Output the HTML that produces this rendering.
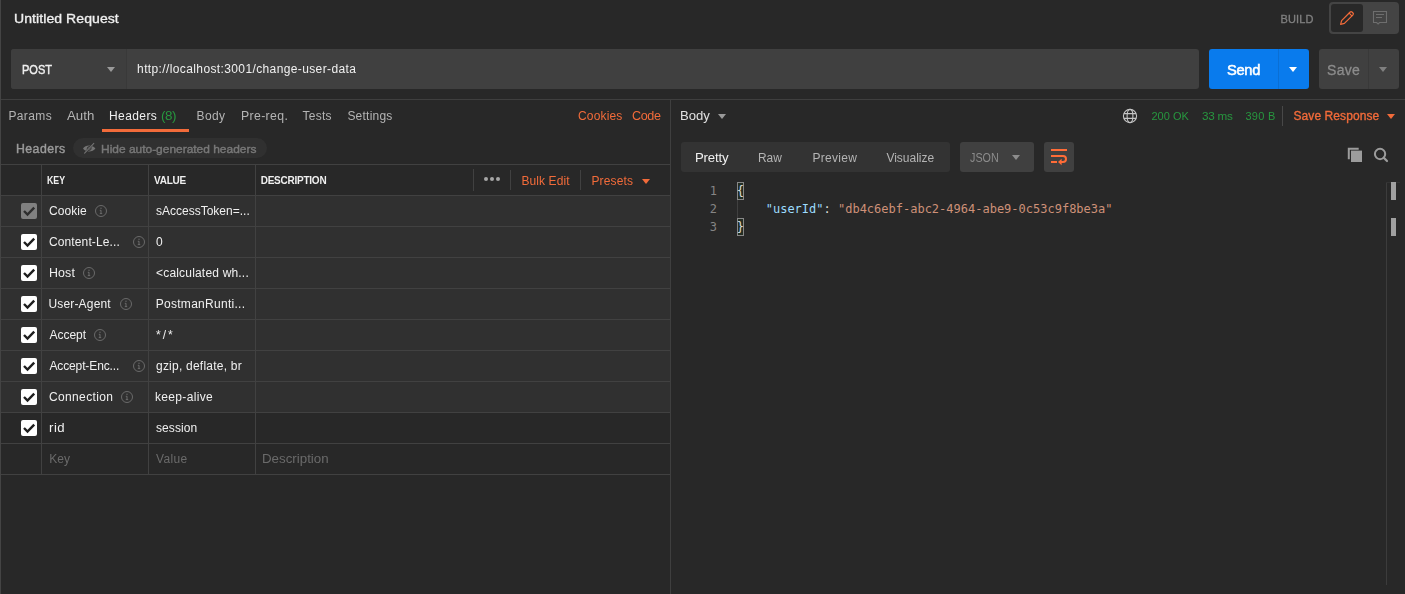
<!DOCTYPE html>
<html lang="en">
<head>
<meta charset="utf-8">
<title>Untitled Request</title>
<style>
html,body{margin:0;padding:0;}
body{width:1405px;height:594px;overflow:hidden;background:#282828;position:relative;font-family:"Liberation Sans",sans-serif;}
.b{position:absolute;}
.t{position:absolute;white-space:nowrap;line-height:16px;height:16px;}
.hl{position:absolute;height:1px;background:#414141;}
.vl{position:absolute;width:1px;background:#414141;}
.row{position:absolute;left:1px;width:669px;height:30px;background:#303030;}
.cb{position:absolute;left:21px;width:16px;height:16px;border-radius:2px;background:#ffffff;}
.cb svg,.ic svg{display:block;}
.ic{position:absolute;}
.mono{font-family:"DejaVu Sans Mono","Liberation Mono",monospace;font-size:12px;line-height:18px;height:18px;position:absolute;white-space:pre;}
.ln{color:#858585;width:20px;text-align:right;left:697px;}
.tri{position:absolute;width:0;height:0;border-left:4px solid transparent;border-right:4px solid transparent;border-top:5px solid #888;}
</style>
</head>
<body>
<div id="app" style="position:absolute;left:0;top:0;width:1405px;height:594px;will-change:transform;">
<!-- frame lines -->
<div class="vl" style="left:0;top:0;height:594px;background:#444444;"></div>
<div class="hl" style="left:1px;top:99px;width:1404px;background:#3f3f3f;"></div>
<div class="vl" style="left:670px;top:100px;height:494px;background:#3f3f3f;"></div>

<!-- build / comment toggle -->
<div class="b" style="left:1329px;top:2px;width:70px;height:32px;border-radius:4px;background:#444444;"></div>
<div class="b" style="left:1331px;top:4px;width:32px;height:28px;border-radius:3px;background:#282828;"></div>
<div class="ic" style="left:1339px;top:10px;"><svg width="16" height="16" viewBox="0 0 16 16" fill="none" stroke="#f26b3a" stroke-width="1.2" stroke-linejoin="round" stroke-linecap="round"><path d="M1.6 14.4 L2.6 10.6 L11.2 2 a1.3 1.3 0 0 1 1.8 0 l1 1 a1.3 1.3 0 0 1 0 1.8 L5.4 13.4 Z"/><path d="M10.2 3.2 L12.8 5.8"/></svg></div>
<div class="ic" style="left:1372px;top:10px;"><svg width="16" height="16" viewBox="0 0 16 16" fill="none" stroke="#6e6e6e" stroke-width="1.1"><path d="M1.5 1.5 H14.5 V12.5 H7.6 L6.1 14 L4.6 12.5 H1.5 Z"/><path d="M4 4.5 H12 M4 7.5 H10"/></svg></div>

<!-- url bar -->
<div class="b" style="left:11px;top:49px;width:1188px;height:40px;border-radius:3px;background:#404040;"></div>
<div class="b" style="left:11px;top:49px;width:115px;height:40px;border-radius:3px 0 0 3px;background:#3e3e3e;"></div>
<div class="vl" style="left:126px;top:49px;height:40px;background:#393939;"></div>
<div class="tri" style="left:107px;top:67px;border-top-color:#9a9a9a;"></div>

<!-- send -->
<div class="b" style="left:1209px;top:49px;width:100px;height:40px;border-radius:3px;background:#097bed;"></div>
<div class="vl" style="left:1278px;top:49px;height:40px;background:#0a6fd4;"></div>
<div class="tri" style="left:1289px;top:67px;border-top-color:#ffffff;"></div>
<!-- save -->
<div class="b" style="left:1319px;top:49px;width:80px;height:40px;border-radius:3px;background:#404040;"></div>
<div class="vl" style="left:1368px;top:49px;height:40px;background:#393939;"></div>
<div class="tri" style="left:1379px;top:67px;border-top-color:#808080;"></div>

<!-- request tabs -->
<div class="b" style="left:102px;top:129px;width:87px;height:3px;background:#f26b3a;"></div>

<!-- headers sub bar -->
<div class="b" style="left:73px;top:138px;width:194px;height:20px;border-radius:10px;background:#303030;"></div>
<div class="ic" style="left:82px;top:141px;"><svg width="15" height="15" viewBox="0 0 15 15"><path d="M1 7.5 C3.2 3.6 10.8 3.6 13.4 7.5 C10.8 11.4 3.2 11.4 1 7.5 Z" fill="#737373"/><circle cx="7.2" cy="7.5" r="1.9" fill="none" stroke="#303030" stroke-width="0.9"/><path d="M2.6 12.2 L11.8 2.4" stroke="#303030" stroke-width="2"/><path d="M2.6 12.2 L11.8 2.4" stroke="#737373" stroke-width="1.1" stroke-linecap="round"/></svg></div>

<!-- table -->
<div class="row" style="top:196px;"></div>
<div class="row" style="top:227px;"></div>
<div class="row" style="top:258px;"></div>
<div class="row" style="top:289px;"></div>
<div class="row" style="top:320px;"></div>
<div class="row" style="top:351px;"></div>
<div class="row" style="top:382px;"></div>
<div class="hl" style="left:1px;top:164px;width:669px;"></div>
<div class="hl" style="left:1px;top:195px;width:669px;"></div>
<div class="hl" style="left:1px;top:226px;width:669px;"></div>
<div class="hl" style="left:1px;top:257px;width:669px;"></div>
<div class="hl" style="left:1px;top:288px;width:669px;"></div>
<div class="hl" style="left:1px;top:319px;width:669px;"></div>
<div class="hl" style="left:1px;top:350px;width:669px;"></div>
<div class="hl" style="left:1px;top:381px;width:669px;"></div>
<div class="hl" style="left:1px;top:412px;width:669px;"></div>
<div class="hl" style="left:1px;top:443px;width:669px;"></div>
<div class="hl" style="left:1px;top:474px;width:669px;"></div>
<div class="vl" style="left:41px;top:165px;height:309px;"></div>
<div class="vl" style="left:148px;top:165px;height:309px;"></div>
<div class="vl" style="left:255px;top:165px;height:309px;"></div>
<!-- header right controls -->
<div class="vl" style="left:473px;top:169px;height:22px;"></div>
<div class="b" style="left:484px;top:177px;width:4px;height:4px;border-radius:2px;background:#a6a6a6;"></div>
<div class="b" style="left:490px;top:177px;width:4px;height:4px;border-radius:2px;background:#a6a6a6;"></div>
<div class="b" style="left:496px;top:177px;width:4px;height:4px;border-radius:2px;background:#a6a6a6;"></div>
<div class="vl" style="left:510px;top:170px;height:20px;"></div>
<div class="vl" style="left:580px;top:170px;height:20px;"></div>
<div class="tri" style="left:642px;top:179px;border-top-color:#f26b3a;"></div>

<div class="cb" style="top:203px;background:#808080;"><svg width="16" height="16" viewBox="0 0 16 16" fill="none" stroke="#2e2e2e" stroke-width="2.4"><path d="M3 8 L6.5 11.5 L13.2 4.6"/></svg></div>
<div class="ic" style="left:94px;top:204px;"><svg width="14" height="14" viewBox="0 0 14 14" fill="none" stroke="#6a6a6a"><circle cx="7" cy="7" r="5.5" stroke-width="1"/><path d="M7 6.2 V9.6 M5.8 6.3 H7 M5.8 9.6 H8.2" stroke-width="1"/><circle cx="7" cy="4.3" r="0.7" fill="#6a6a6a" stroke="none"/></svg></div>
<div class="cb" style="top:234px;"><svg width="16" height="16" viewBox="0 0 16 16" fill="none" stroke="#1e1e1e" stroke-width="2.4"><path d="M3 8 L6.5 11.5 L13.2 4.6"/></svg></div>
<div class="ic" style="left:132px;top:235px;"><svg width="14" height="14" viewBox="0 0 14 14" fill="none" stroke="#6a6a6a"><circle cx="7" cy="7" r="5.5" stroke-width="1"/><path d="M7 6.2 V9.6 M5.8 6.3 H7 M5.8 9.6 H8.2" stroke-width="1"/><circle cx="7" cy="4.3" r="0.7" fill="#6a6a6a" stroke="none"/></svg></div>
<div class="cb" style="top:265px;"><svg width="16" height="16" viewBox="0 0 16 16" fill="none" stroke="#1e1e1e" stroke-width="2.4"><path d="M3 8 L6.5 11.5 L13.2 4.6"/></svg></div>
<div class="ic" style="left:82px;top:266px;"><svg width="14" height="14" viewBox="0 0 14 14" fill="none" stroke="#6a6a6a"><circle cx="7" cy="7" r="5.5" stroke-width="1"/><path d="M7 6.2 V9.6 M5.8 6.3 H7 M5.8 9.6 H8.2" stroke-width="1"/><circle cx="7" cy="4.3" r="0.7" fill="#6a6a6a" stroke="none"/></svg></div>
<div class="cb" style="top:296px;"><svg width="16" height="16" viewBox="0 0 16 16" fill="none" stroke="#1e1e1e" stroke-width="2.4"><path d="M3 8 L6.5 11.5 L13.2 4.6"/></svg></div>
<div class="ic" style="left:119px;top:297px;"><svg width="14" height="14" viewBox="0 0 14 14" fill="none" stroke="#6a6a6a"><circle cx="7" cy="7" r="5.5" stroke-width="1"/><path d="M7 6.2 V9.6 M5.8 6.3 H7 M5.8 9.6 H8.2" stroke-width="1"/><circle cx="7" cy="4.3" r="0.7" fill="#6a6a6a" stroke="none"/></svg></div>
<div class="cb" style="top:327px;"><svg width="16" height="16" viewBox="0 0 16 16" fill="none" stroke="#1e1e1e" stroke-width="2.4"><path d="M3 8 L6.5 11.5 L13.2 4.6"/></svg></div>
<div class="ic" style="left:93px;top:328px;"><svg width="14" height="14" viewBox="0 0 14 14" fill="none" stroke="#6a6a6a"><circle cx="7" cy="7" r="5.5" stroke-width="1"/><path d="M7 6.2 V9.6 M5.8 6.3 H7 M5.8 9.6 H8.2" stroke-width="1"/><circle cx="7" cy="4.3" r="0.7" fill="#6a6a6a" stroke="none"/></svg></div>
<div class="cb" style="top:358px;"><svg width="16" height="16" viewBox="0 0 16 16" fill="none" stroke="#1e1e1e" stroke-width="2.4"><path d="M3 8 L6.5 11.5 L13.2 4.6"/></svg></div>
<div class="ic" style="left:132px;top:359px;"><svg width="14" height="14" viewBox="0 0 14 14" fill="none" stroke="#6a6a6a"><circle cx="7" cy="7" r="5.5" stroke-width="1"/><path d="M7 6.2 V9.6 M5.8 6.3 H7 M5.8 9.6 H8.2" stroke-width="1"/><circle cx="7" cy="4.3" r="0.7" fill="#6a6a6a" stroke="none"/></svg></div>
<div class="cb" style="top:389px;"><svg width="16" height="16" viewBox="0 0 16 16" fill="none" stroke="#1e1e1e" stroke-width="2.4"><path d="M3 8 L6.5 11.5 L13.2 4.6"/></svg></div>
<div class="ic" style="left:120px;top:390px;"><svg width="14" height="14" viewBox="0 0 14 14" fill="none" stroke="#6a6a6a"><circle cx="7" cy="7" r="5.5" stroke-width="1"/><path d="M7 6.2 V9.6 M5.8 6.3 H7 M5.8 9.6 H8.2" stroke-width="1"/><circle cx="7" cy="4.3" r="0.7" fill="#6a6a6a" stroke="none"/></svg></div>
<div class="cb" style="top:420px;"><svg width="16" height="16" viewBox="0 0 16 16" fill="none" stroke="#1e1e1e" stroke-width="2.4"><path d="M3 8 L6.5 11.5 L13.2 4.6"/></svg></div>

<!-- response header -->
<div class="tri" style="left:718px;top:114px;border-top-color:#9a9a9a;"></div>
<div class="ic" style="left:1122px;top:108px;"><svg width="16" height="16" viewBox="0 0 16 16" fill="none" stroke="#c4c4c4" stroke-width="1.1"><circle cx="8" cy="8" r="6.6"/><ellipse cx="8" cy="8" rx="2.9" ry="6.6"/><path d="M1.9 5.6 H14.1 M1.9 10.4 H14.1"/></svg></div>
<div class="vl" style="left:1282px;top:106px;height:20px;background:#484848;"></div>
<div class="tri" style="left:1387px;top:114px;border-top-color:#f26b3a;"></div>

<!-- response view tabs -->
<div class="b" style="left:681px;top:142px;width:269px;height:30px;border-radius:3px;background:#333333;"></div>
<div class="b" style="left:960px;top:142px;width:74px;height:30px;border-radius:3px;background:#404040;"></div>
<div class="tri" style="left:1012px;top:155px;border-top-color:#8c8c8c;"></div>
<div class="b" style="left:1044px;top:142px;width:30px;height:30px;border-radius:3px;background:#404040;"></div>
<div class="ic" style="left:1050px;top:148px;"><svg width="18" height="18" viewBox="0 0 18 18" fill="none" stroke="#ff6c37" stroke-width="2"><path d="M1 2 H17"/><path d="M1 14 H7"/><path d="M1 8 H13 a3 3 0 0 1 0 6 H11"/><path d="M8 14 L11.6 10.8 V17.2 Z" fill="#ff6c37" stroke="none"/></svg></div>
<div class="ic" style="left:1347px;top:147px;"><svg width="16" height="16" viewBox="0 0 16 16"><path d="M1.8 12.2 V1.8 H11.7" fill="none" stroke="#9c9c9c" stroke-width="2"/><rect x="4" y="3.6" width="11" height="11.4" fill="#9c9c9c"/></svg></div>
<div class="ic" style="left:1373px;top:147px;"><svg width="16" height="16" viewBox="0 0 16 16" fill="none" stroke="#9c9c9c" stroke-linecap="round"><circle cx="7.05" cy="7" r="5.15" stroke-width="2"/><path d="M10.9 10.9 L14 14" stroke-width="2.2"/></svg></div>

<!-- overview ruler -->
<div class="vl" style="left:1386px;top:182px;height:403px;background:#3c3c3c;"></div>
<div class="hl" style="left:1386px;top:182px;width:14px;background:#333333;"></div>
<div class="b" style="left:1391px;top:182px;width:5px;height:18px;background:#a0a0a0;"></div>
<div class="b" style="left:1391px;top:218px;width:5px;height:18px;background:#a0a0a0;"></div>

<!-- text -->
<div class="t" id="title" style="left:13.80px;top:10.50px;font-size:13px;color:#f0f0f0;letter-spacing:0.070px;transform:scaleX(1.0780);transform-origin:0 0;-webkit-text-stroke:0.32px #f0f0f0;">Untitled Request</div>
<div class="t" id="build" style="left:1280.40px;top:11.19px;font-size:11px;color:#808080;letter-spacing:0.150px;-webkit-text-stroke:0.3px #808080;">BUILD</div>
<div class="t" id="post" style="left:22.40px;top:61.84px;font-size:12px;color:#f0f0f0;transform:scaleX(0.9198);transform-origin:0 0;-webkit-text-stroke:0.4px #f0f0f0;">POST</div>
<div class="t" id="url" style="left:137.10px;top:60.84px;font-size:12px;color:#f0f0f0;letter-spacing:0.378px;">http://localhost:3001/change-user-data</div>
<div class="t" id="send" style="left:1227.00px;top:61.75px;font-size:14px;color:#ffffff;letter-spacing:-0.317px;transform:scaleX(1.0500);transform-origin:0 0;-webkit-text-stroke:0.5px #ffffff;">Send</div>
<div class="t" id="save" style="left:1327.00px;top:61.75px;font-size:14px;color:#8c8c8c;letter-spacing:0.333px;-webkit-text-stroke:0.3px #8c8c8c;">Save</div>
<div class="t" id="tparams" style="left:8.40px;top:107.84px;font-size:12px;color:#b4b4b4;letter-spacing:0.400px;">Params</div>
<div class="t" id="tauth" style="left:67.00px;top:107.84px;font-size:12px;color:#b4b4b4;transform:scaleX(1.1042);transform-origin:0 0;">Auth</div>
<div class="t" id="theaders" style="left:109.00px;top:107.84px;font-size:12px;color:#f0f0f0;letter-spacing:0.417px;">Headers</div>
<div class="t" id="tcount" style="left:161.00px;top:107.84px;font-size:12px;color:#27973f;letter-spacing:-0.429px;transform:scaleX(1.1200);transform-origin:0 0;">(8)</div>
<div class="t" id="tbody" style="left:196.50px;top:107.84px;font-size:12px;color:#b4b4b4;letter-spacing:0.400px;">Body</div>
<div class="t" id="tprereq" style="left:240.80px;top:107.84px;font-size:12px;color:#b4b4b4;letter-spacing:0.343px;transform:scaleX(1.0227);transform-origin:0 0;">Pre-req.</div>
<div class="t" id="ttests" style="left:302.40px;top:107.84px;font-size:12px;color:#b4b4b4;letter-spacing:0.300px;">Tests</div>
<div class="t" id="tsettings" style="left:347.40px;top:107.84px;font-size:12px;color:#b4b4b4;letter-spacing:0.229px;">Settings</div>
<div class="t" id="cookies" style="left:578.00px;top:107.84px;font-size:12px;color:#f26b3a;letter-spacing:0.167px;">Cookies</div>
<div class="t" id="code" style="left:631.50px;top:107.84px;font-size:12px;color:#f26b3a;letter-spacing:-0.381px;transform:scaleX(1.0500);transform-origin:0 0;">Code</div>
<div class="t" id="hlabel" style="left:15.60px;top:140.84px;font-size:12px;color:#9a9a9a;letter-spacing:0.433px;transform:scaleX(1.0255);transform-origin:0 0;-webkit-text-stroke:0.4px #9a9a9a;">Headers</div>
<div class="t" id="hide" style="left:101.40px;top:141.19px;font-size:11px;color:#787878;transform:scaleX(1.0859);transform-origin:0 0;-webkit-text-stroke:0.4px #787878;">Hide auto-generated headers</div>
<div class="t" id="hkey" style="left:47.40px;top:172.53px;font-size:10px;color:#f0f0f0;font-weight:700;transform:scaleX(0.8800);transform-origin:0 0;">KEY</div>
<div class="t" id="hvalue" style="left:154.00px;top:172.53px;font-size:10px;color:#f0f0f0;font-weight:700;letter-spacing:-0.250px;">VALUE</div>
<div class="t" id="hdesc" style="left:260.70px;top:172.53px;font-size:10px;color:#f0f0f0;font-weight:700;letter-spacing:-0.240px;">DESCRIPTION</div>
<div class="t" id="bulk" style="left:521.40px;top:173.04px;font-size:12px;color:#f26b3a;letter-spacing:0.100px;">Bulk Edit</div>
<div class="t" id="presets" style="left:591.40px;top:173.04px;font-size:12px;color:#f26b3a;letter-spacing:0.167px;">Presets</div>
<div class="t" id="k0" style="left:49.00px;top:202.84px;font-size:12px;color:#f0f0f0;letter-spacing:0.040px;">Cookie</div>
<div class="t" id="v0" style="left:156.00px;top:202.84px;font-size:12px;color:#f0f0f0;">sAccessToken=...</div>
<div class="t" id="k1" style="left:49.00px;top:233.84px;font-size:12px;color:#f0f0f0;letter-spacing:0.117px;">Content-Le...</div>
<div class="t" id="v1" style="left:156.00px;top:233.84px;font-size:12px;color:#f0f0f0;">0</div>
<div class="t" id="k2" style="left:49.20px;top:264.84px;font-size:12px;color:#f0f0f0;letter-spacing:0.125px;transform:scaleX(1.0340);transform-origin:0 0;">Host</div>
<div class="t" id="v2" style="left:156.00px;top:264.84px;font-size:12px;color:#f0f0f0;letter-spacing:0.188px;">&lt;calculated wh...</div>
<div class="t" id="k3" style="left:48.40px;top:295.84px;font-size:12px;color:#f0f0f0;letter-spacing:0.178px;">User-Agent</div>
<div class="t" id="v3" style="left:155.70px;top:295.84px;font-size:12px;color:#f0f0f0;letter-spacing:0.286px;">PostmanRunti...</div>
<div class="t" id="k4" style="left:49.40px;top:326.84px;font-size:12px;color:#f0f0f0;">Accept</div>
<div class="t" id="v4" style="left:156.00px;top:326.84px;font-size:12px;color:#f0f0f0;letter-spacing:2.000px;">*/*</div>
<div class="t" id="k5" style="left:49.40px;top:357.84px;font-size:12px;color:#f0f0f0;letter-spacing:-0.117px;">Accept-Enc...</div>
<div class="t" id="v5" style="left:156.00px;top:357.84px;font-size:12px;color:#f0f0f0;letter-spacing:0.225px;">gzip, deflate, br</div>
<div class="t" id="k6" style="left:49.00px;top:388.84px;font-size:12px;color:#f0f0f0;letter-spacing:0.356px;">Connection</div>
<div class="t" id="v6" style="left:155.00px;top:388.84px;font-size:12px;color:#f0f0f0;letter-spacing:0.333px;">keep-alive</div>
<div class="t" id="k7" style="left:49.30px;top:419.84px;font-size:12px;color:#f0f0f0;letter-spacing:0.450px;transform:scaleX(1.1000);transform-origin:0 0;">rid</div>
<div class="t" id="v7" style="left:156.00px;top:419.84px;font-size:12px;color:#f0f0f0;letter-spacing:0.100px;">session</div>
<div class="t" id="pk" style="left:49.30px;top:450.84px;font-size:12px;color:#6a6a6a;">Key</div>
<div class="t" id="pv" style="left:156.00px;top:450.84px;font-size:12px;color:#6a6a6a;letter-spacing:0.350px;">Value</div>
<div class="t" id="pd" style="left:262.00px;top:450.84px;font-size:12px;color:#6a6a6a;transform:scaleX(1.1103);transform-origin:0 0;">Description</div>
<div class="t" id="rbody" style="left:680.00px;top:107.84px;font-size:12px;color:#e0e0e0;transform:scaleX(1.0923);transform-origin:0 0;">Body</div>
<div class="t" id="s200" style="left:1151.50px;top:108.19px;font-size:11px;color:#27973f;">200 OK</div>
<div class="t" id="sms" style="left:1201.50px;top:108.19px;font-size:11px;color:#27973f;letter-spacing:-0.235px;transform:scaleX(1.0621);transform-origin:0 0;">33 ms</div>
<div class="t" id="sb" style="left:1245.50px;top:108.19px;font-size:11px;color:#27973f;letter-spacing:0.250px;">390 B</div>
<div class="t" id="saveresp" style="left:1293.50px;top:107.84px;font-size:12px;color:#f26b3a;letter-spacing:0.083px;-webkit-text-stroke:0.35px #f26b3a;">Save Response</div>
<div class="t" id="pretty" style="left:695.00px;top:149.84px;font-size:12px;color:#f0f0f0;letter-spacing:-0.182px;transform:scaleX(1.1000);transform-origin:0 0;">Pretty</div>
<div class="t" id="raw" style="left:757.60px;top:149.84px;font-size:12px;color:#b4b4b4;transform:scaleX(0.9930);transform-origin:0 0;">Raw</div>
<div class="t" id="preview" style="left:812.40px;top:149.84px;font-size:12px;color:#b4b4b4;letter-spacing:0.300px;">Preview</div>
<div class="t" id="visualize" style="left:886.40px;top:149.84px;font-size:12px;color:#b4b4b4;">Visualize</div>
<div class="t" id="json" style="left:969.50px;top:149.84px;font-size:12px;color:#8c8c8c;transform:scaleX(0.8968);transform-origin:0 0;">JSON</div>
</div>
<!-- code viewer -->
<div class="b" style="left:671px;top:181px;width:715px;height:403px;background:#282828;"></div>
<div class="b" style="left:737px;top:182px;width:5px;height:16px;border:1px solid #888888;background:rgba(0,100,0,0.1);"></div>
<div class="b" style="left:737px;top:218px;width:5px;height:16px;border:1px solid #888888;background:rgba(0,100,0,0.1);"></div>
<div class="vl" style="left:737px;top:200px;height:18px;background:#404040;"></div>
<div class="mono ln" style="top:182px;">1</div>
<div class="mono ln" style="top:200px;">2</div>
<div class="mono ln" style="top:218px;">3</div>
<div class="mono" style="left:736.8px;top:182px;color:#dcdcdc;">{</div>
<div class="mono" style="left:736.8px;top:200px;color:#dcdcdc;">    <span style="color:#9cdcfe;">"userId"</span>: <span style="color:#ce9178;">"db4c6ebf-abc2-4964-abe9-0c53c9f8be3a"</span></div>
<div class="mono" style="left:736.8px;top:218px;color:#dcdcdc;">}</div>
</body>
</html>
